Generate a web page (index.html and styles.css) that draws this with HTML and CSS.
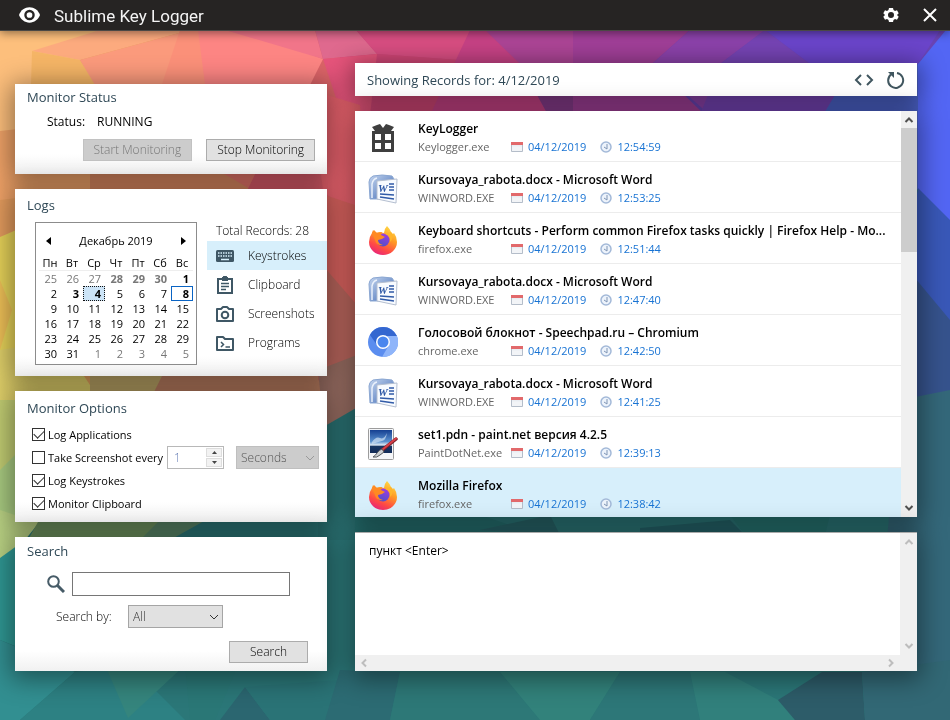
FILE: index.html
```html
<!DOCTYPE html>
<html lang="en">
<head>
<meta charset="utf-8">
<meta name="viewport" content="width=device-width, initial-scale=1">
<title>Sublime Key Logger</title>
<link rel="stylesheet" href="styles.css">
</head>
<body>
<svg class="backdrop" viewBox="0 0 950 720" preserveAspectRatio="none" aria-hidden="true">
  <rect width="950" height="720" fill="#2b7778"/>
  <rect y="30" width="180" height="370" fill="#e2a05c"/>
  <rect x="180" y="30" width="190" height="370" fill="#dc6468"/>
  <rect x="340" y="30" width="250" height="100" fill="#cc4679"/>
  <rect x="590" y="30" width="360" height="100" fill="#6a44b4"/>
  <polygon points="0,30 100,30 80,60 98,120 0,135" fill="#fdbf7c"/>
  <polygon points="32,51 100,30 190,30 80,60" fill="#fcaa7e"/>
  <polygon points="32,51 80,60 98,86 60,130 30,120" fill="#f5b566"/>
  <polygon points="80,60 190,30 165,90 150,190 98,90" fill="#fb9a7c"/>
  <polygon points="180,30 200,30 208,90 205,200 140,200 160,90" fill="#fb9079"/>
  <polygon points="198,30 245,30 323,59 305,95 260,200 207,100" fill="#fd8583"/>
  <polygon points="225,30 315,30 323,59" fill="#f17589"/>
  <polygon points="315,30 356,30 377,54 323,59" fill="#df698e"/>
  <polygon points="323,59 377,54 400,130 355,180 340,110" fill="#e6547b"/>
  <polygon points="356,30 475,30 459,60 377,54" fill="#d94e82"/>
  <polygon points="377,54 459,60 430,115 370,115" fill="#d14676"/>
  <polygon points="470,30 485,30 520,64 560,115 430,115" fill="#c74285"/>
  <polygon points="485,30 573,30 573,64 520,64" fill="#ad4596"/>
  <polygon points="520,64 573,64 573,115 548,115" fill="#883c8c"/>
  <polygon points="573,30 690,30 652,64 705,115 573,115" fill="#a13f98"/>
  <polygon points="690,30 765,30 720,64 710,115 652,64" fill="#8c42ab"/>
  <polygon points="765,30 940,30 918,64 810,64" fill="#6b45cb"/>
  <polygon points="765,30 810,64 840,96 830,115 700,115 720,64" fill="#7644b5"/>
  <polygon points="918,64 946,30 950,30 950,230 918,190" fill="#5366f4"/>
  <polygon points="820,120 838,90 918,64 918,190 880,150" fill="#4b62c9"/>
  <polygon points="918,188 950,220 950,330 900,300" fill="#3958b8"/>
  <polygon points="900,260 950,320 950,410 900,410" fill="#36538d"/>
  <polygon points="900,400 950,390 950,720 870,720" fill="#34687a"/>
  <polygon points="0,131 98,120 90,200 0,205" fill="#efa267"/>
  <polygon points="0,200 160,180 160,400 0,240" fill="#e39b5d"/>
  <polygon points="0,237 35,222 35,340 0,370" fill="#e6d259"/>
  <polygon points="0,280 12,310 0,350" fill="#edbf57"/>
  <polygon points="0,350 60,340 100,400 0,410" fill="#dfcf69"/>
  <polygon points="90,340 200,360 190,400 90,400" fill="#bca566"/>
  <polygon points="170,360 330,350 330,400 150,400" fill="#b97c5f"/>
  <polygon points="90,160 205,160 252,190 90,195" fill="#db8860"/>
  <polygon points="200,160 280,160 252,190" fill="#e57569"/>
  <polygon points="262,160 370,160 370,260 310,200 245,195" fill="#da5b69"/>
  <polygon points="310,90 360,105 370,240 323,190" fill="#e7616c"/>
  <polygon points="310,190 370,210 370,330 320,270" fill="#d9625e"/>
  <polygon points="318,260 370,320 370,410 318,380" fill="#ba665d"/>
  <polygon points="318,370 370,350 370,430 325,440" fill="#986d62"/>
  <polygon points="318,430 370,400 370,540 318,540" fill="#2a7273"/>
  <polygon points="0,400 20,400 30,450 0,480" fill="#c1cc72"/>
  <polygon points="0,470 30,440 45,522 0,540" fill="#a8ca80"/>
  <polygon points="15,515 45,515 25,540 0,560 0,510" fill="#b9d183"/>
  <polygon points="42,515 165,515 150,540 25,545" fill="#6f945f"/>
  <polygon points="165,515 215,515 170,540 140,540" fill="#5a8768"/>
  <polygon points="0,558 25,540 25,650 0,640" fill="#2f9793"/>
  <polygon points="0,640 75,672 20,720 0,720" fill="#328f91"/>
  <polygon points="75,672 130,665 185,720 20,720" fill="#2d8183"/>
  <polygon points="105,665 185,665 128,718" fill="#35857d"/>
  <polygon points="185,665 235,672 215,720 190,720" fill="#2a7776"/>
  <polygon points="245,687 270,720 220,720" fill="#2b6670"/>
  <polygon points="245,687 340,680 325,720 270,720" fill="#2a7376"/>
  <polygon points="340,670 400,672 390,720 325,720" fill="#2c6b73"/>
  <polygon points="400,672 500,672 540,720 390,720" fill="#2d7877"/>
  <polygon points="500,672 620,672 590,720 540,720" fill="#32827b"/>
  <polygon points="620,672 690,672 700,720 590,720" fill="#2d7778"/>
  <polygon points="690,672 725,672 778,700 795,720 700,720" fill="#31807c"/>
  <polygon points="778,700 822,672 862,672 865,720 795,720" fill="#2d5c69"/>
  <polygon points="862,672 950,660 950,720 865,720" fill="#326875"/>
  <polygon points="355,515 480,515 540,535 355,535" fill="#257070"/>
  <polygon points="480,530 550,515 560,535" fill="#28656a"/>
  <polygon points="640,528 730,520 745,535 640,535" fill="#24646a"/>
  <polygon points="730,515 830,515 825,535 745,535" fill="#267471"/>
</svg>

<svg class="defs" aria-hidden="true">
  <defs>
    <linearGradient id="g-word" x1="0" y1="0" x2="1" y2="1"><stop offset="0" stop-color="#c5d6ef"/><stop offset="1" stop-color="#3d68b4"/></linearGradient>
    <linearGradient id="g-fox" x1=".8" y1="0" x2=".3" y2="1"><stop offset="0" stop-color="#ffe14a"/><stop offset=".4" stop-color="#ff9a24"/><stop offset=".75" stop-color="#ff4a45"/><stop offset="1" stop-color="#e8257b"/></linearGradient>
    <linearGradient id="g-globe" x1=".7" y1="0" x2=".3" y2="1"><stop offset="0" stop-color="#a03be0"/><stop offset="1" stop-color="#4c50c8"/></linearGradient>
    <linearGradient id="g-sky" x1="0" y1="0" x2="0" y2="1"><stop offset="0" stop-color="#153f91"/><stop offset=".5" stop-color="#5b92d0"/><stop offset=".66" stop-color="#e5eef6"/><stop offset=".7" stop-color="#183765"/><stop offset="1" stop-color="#122b58"/></linearGradient>
    <symbol id="gift" viewBox="0 0 30 30"><path d="M4 8h22v21H4z" fill="#3f3f3f"/><path d="M7 11h6v6H7zM17 11h6v6h-6zM7 20h6v6H7zM17 20h6v6h-6z" fill="#fff"/><path d="M15 5 12 1 9 2 4 4l3 4h16l3-4-5-2-3-1z" fill="#3f3f3f"/></symbol>
    <symbol id="word" viewBox="0 0 30 30"><path d="M5 2q9-2 19 0l2 3-3 20H2L1 8q0-4 4-6z" fill="url(#g-word)" stroke="#8ba7d2"/><path d="M9 4q-4 1-5 6v14" fill="none" stroke="#eaf1fb" stroke-width="1.500"/><path d="m9 7 20-2-1 24-19-4z" fill="#f8fbff" stroke="#b5bfd0"/><text x="10" y="18" class="w-mark">W</text><path d="M21 10h5M21 13h5M21 16h5M12 20l14 1M12 23l14 2" stroke="#315ba8" stroke-width="1.500"/></symbol>
    <symbol id="fox" viewBox="0 0 30 30"><path d="M19 1q3 3 4 6l2 2 1-1q3 4 3 9a14 13 0 0 1-28 0q0-5 3-9l1-3 2 3 5-1 4 1q0-4 3-7z" fill="url(#g-fox)"/><circle cx="15" cy="15" r="6.500" fill="url(#g-globe)"/><path d="M4 8 6 5l3 3 5-1-1 3 4 2-3 2-4 1q0 4 5 5-7 1-8-5-2-4-3-7z" fill="#ff8a22"/><path d="M17 9q6 1 5 8 5-5 1-10z" fill="#ffb52b"/></symbol>
    <symbol id="chrome" viewBox="0 0 30 30"><circle cx="15" cy="15" r="15" fill="#5b8def"/><path d="M15 0A15 15 0 0 1 29 9H15a7 7 0 0 0-6 9L2 8A15 15 0 0 1 15 0z" fill="#3467d0"/><path d="M29 9a15 15 0 0 1-15 21l7-12q2-5-2-9z" fill="#8fb5fa"/><circle cx="15" cy="15" r="7" fill="#fff"/><circle cx="15" cy="15" r="5.500" fill="#4a86ee"/></symbol>
    <symbol id="paint" viewBox="0 0 30 32"><rect x="0.500" y="0.500" width="25" height="31" rx="1" fill="#f5f6f8" stroke="#9c9c9c"/><rect x="2" y="2" width="22" height="23" fill="url(#g-sky)"/><path d="M4 14q4-6 8-4t7-5q-1 7-5 8t-10 3z" fill="#cfe0f2" opacity=".7"/><path d="M28 11 13 23" stroke="#7d1c26" stroke-width="3.500" stroke-linecap="round"/><path d="M28 10.500 14 22" stroke="#d84049" stroke-width="2" stroke-linecap="round"/><path d="m14 21 2 3-4 3q-3 3-7 2 3-2 4-4 2-3 5-4z" fill="#ccd0d4" stroke="#565b61"/></symbol>
    <symbol id="date" viewBox="0 0 12 12"><path d="M.5 1.500h11v9H.5z" fill="#e9edf2" stroke="#b4bdc9"/><path d="M0 1h12v3H0z" fill="#e2696b"/><path d="M2 5v5M4 5v5M6 5v5M8 5v5M10 5v5M1 7h10M1 9h10" stroke="#fff" stroke-width=".5"/></symbol>
    <symbol id="clock" viewBox="0 0 12 12"><circle cx="6" cy="6" r="5" fill="#edf3fb" stroke="#a3b9d8" stroke-width="1.500"/><path d="M7 3v5L4 6" fill="none" stroke="#7f95b5"/></symbol>
    <symbol id="up" viewBox="0 0 10 10"><path d="M1.500 7 5 3.500 8.500 7" fill="none" stroke="currentColor" stroke-width="2"/></symbol>
    <symbol id="down" viewBox="0 0 10 10"><path d="M1.500 3 5 6.500 8.500 3" fill="none" stroke="currentColor" stroke-width="2"/></symbol>
    <symbol id="left" viewBox="0 0 10 10"><path d="M7 1.500 3.500 5 7 8.500" fill="none" stroke="currentColor" stroke-width="2"/></symbol>
    <symbol id="right" viewBox="0 0 10 10"><path d="M3 1.500 6.500 5 3 8.500" fill="none" stroke="currentColor" stroke-width="2"/></symbol>
  </defs>
</svg>

<header class="titlebar">
  <svg class="eye" viewBox="0 0 22 16" aria-hidden="true"><path d="M11 0C6 0 2 3 0 8c2 5 6 8 11 8s9-3 11-8c-2-5-6-8-11-8z" fill="#fff"/><circle cx="11" cy="8" r="5.500" fill="#262423"/><circle cx="11" cy="8" r="3" fill="#fff"/></svg>
  <h1>Sublime Key Logger</h1>
  <button class="icon-btn" aria-label="Settings"><svg width="16" height="16" viewBox="0 0 16 16"><path fill="#fff" fill-rule="evenodd" d="M6 1h4l.5 2 1.500 1 2-.7 1.700 3L14 8l1.700 1.700-1.700 3-2-.7-1.500 1-.5 2H6l-.5-2L4 12l-2 .7-1.700-3L2 8 .3 6.300l1.700-3L4 4l1.500-1zM8 5a3 3 0 1 0 0 6 3 3 0 0 0 0-6z"/></svg></button>
  <button class="icon-btn" aria-label="Close"><svg width="14" height="14" viewBox="0 0 14 14"><path d="m1 1 12 12M13 1 1 13" stroke="#fff" stroke-width="2"/></svg></button>
</header>

<main class="layout">
  <div class="side">
    <section class="panel status">
      <h2>Monitor Status</h2>
      <p class="state"><span>Status:</span><span>RUNNING</span></p>
      <div class="actions"><button class="btn" disabled>Start Monitoring</button><button class="btn">Stop Monitoring</button></div>
    </section>

    <section class="panel logs">
      <h2>Logs</h2>
      <div class="logs-body">
        <div class="calendar">
          <div class="month"><button aria-label="Previous month"><svg width="5" height="8" viewBox="0 0 5 8"><path d="M5 0v8L0 4z"/></svg></button><span>Декабрь 2019</span><button aria-label="Next month"><svg width="5" height="8" viewBox="0 0 5 8"><path d="M0 0v8l5-4z"/></svg></button></div>
          <table>
            <thead><tr><th>Пн</th><th>Вт</th><th>Ср</th><th>Чт</th><th>Пт</th><th>Сб</th><th>Вс</th></tr></thead>
            <tbody>
              <tr><td class="out">25</td><td class="out">26</td><td class="out">27</td><td class="out has">28</td><td class="out has">29</td><td class="out has">30</td><td class="has">1</td></tr>
              <tr><td>2</td><td class="has">3</td><td class="has picked">4</td><td>5</td><td>6</td><td>7</td><td class="has today">8</td></tr>
              <tr><td>9</td><td>10</td><td>11</td><td>12</td><td>13</td><td>14</td><td>15</td></tr>
              <tr><td>16</td><td>17</td><td>18</td><td>19</td><td>20</td><td>21</td><td>22</td></tr>
              <tr><td>23</td><td>24</td><td>25</td><td>26</td><td>27</td><td>28</td><td>29</td></tr>
              <tr><td>30</td><td>31</td><td class="out">1</td><td class="out">2</td><td class="out">3</td><td class="out">4</td><td class="out">5</td></tr>
            </tbody>
          </table>
        </div>
        <nav class="kinds">
          <p>Total Records: 28</p>
          <a href="#keystrokes" class="on"><svg viewBox="0 0 18 18"><rect y="3" width="18" height="12" rx="1.500" fill="#3f5765"/><path d="M2 6h14M2 9h14" stroke="#d7effb" stroke-width="1.500" stroke-dasharray="1.500 1"/><path d="M5 12.500h8" stroke="#d7effb" stroke-width="1.500"/></svg>Keystrokes</a>
          <a href="#clipboard"><svg viewBox="0 0 18 18"><g fill="none" stroke="#3f5765" stroke-width="2"><path d="M2 3h14v14H2z"/><path d="M5 7.500h8M5 10.500h8M5 13.500h5" stroke-width="1.500"/></g><path d="M6 1h1a2 2 0 0 1 4 0h1v4H6z" fill="#3f5765"/></svg>Clipboard</a>
          <a href="#screenshots"><svg viewBox="0 0 18 18"><g fill="none" stroke="#3f5765" stroke-width="2"><path d="M1 4h4l2-2h4l2 2h4v12H1z" stroke-linejoin="round"/><circle cx="9" cy="10" r="3.300"/></g></svg>Screenshots</a>
          <a href="#programs"><svg viewBox="0 0 18 18"><g fill="none" stroke="#3f5765" stroke-width="2"><path d="M1 3h6l2 2h8v11H1z" stroke-linejoin="round"/><path d="m5 8 2.500 2.500L5 13M9.500 13H14" stroke-width="1.500"/></g></svg>Programs</a>
        </nav>
      </div>
    </section>

    <section class="panel options">
      <h2>Monitor Options</h2>
      <div class="opt"><label><input type="checkbox" checked>Log Applications</label></div>
      <div class="opt timed">
        <label><input type="checkbox">Take Screenshot every</label>
        <span class="spinner"><input type="text" value="1" aria-label="Interval" disabled><span class="steps"><button aria-label="Increase" disabled><svg width="5" height="3" viewBox="0 0 5 3"><path d="M0 3h5L2.500 0z" fill="#444"/></svg></button><button aria-label="Decrease" disabled><svg width="5" height="3" viewBox="0 0 5 3"><path d="M0 0h5L2.500 3z" fill="#444"/></svg></button></span></span>
        <span class="select"><select aria-label="Unit" disabled><option>Seconds</option></select><svg width="10" height="6" viewBox="0 0 10 6"><path d="m1 1 4 4 4-4" fill="none" stroke="currentColor"/></svg></span>
      </div>
      <div class="opt"><label><input type="checkbox" checked>Log Keystrokes</label></div>
      <div class="opt"><label><input type="checkbox" checked>Monitor Clipboard</label></div>
    </section>

    <section class="panel search">
      <h2>Search</h2>
      <div class="query"><svg width="18" height="18" viewBox="0 0 18 18" aria-hidden="true"><circle cx="6.500" cy="6.500" r="5.300" fill="none" stroke="#465b67" stroke-width="2"/><path d="m10 10 7 7" stroke="#465b67" stroke-width="3"/></svg><input type="text" aria-label="Search text"></div>
      <div class="by"><label for="by">Search by:</label><span class="select"><select id="by"><option>All</option></select><svg width="10" height="6" viewBox="0 0 10 6"><path d="m1 1 4 4 4-4" fill="none" stroke="currentColor"/></svg></span></div>
      <div class="go"><button class="btn">Search</button></div>
    </section>
  </div>

  <div class="content">
    <section class="panel heading">
      <h2>Showing Records for: 4/12/2019</h2>
      <button class="icon-btn" aria-label="View source"><svg width="20" height="14" viewBox="0 0 20 14"><path d="M7 2 2 7l5 5M13 2l5 5-5 5" fill="none" stroke="#40565f" stroke-width="2"/></svg></button>
      <button class="icon-btn" aria-label="Refresh"><svg width="18" height="18" viewBox="0 0 18 18"><path d="M10 2a7.500 7.500 0 1 1-6 1.500" fill="none" stroke="#40565f" stroke-width="2"/><path d="M1 1h6v6z" fill="#40565f"/></svg></button>
    </section>

    <section class="panel records">
      <ul>
        <li><svg class="app"><use href="#gift"/></svg><div class="rec"><h3>KeyLogger</h3><p><span class="exe">Keylogger.exe</span><svg><use href="#date"/></svg><time>04/12/2019</time><svg><use href="#clock"/></svg><time>12:54:59</time></p></div></li>
        <li><svg class="app"><use href="#word"/></svg><div class="rec"><h3>Kursovaya_rabota.docx - Microsoft Word</h3><p><span class="exe">WINWORD.EXE</span><svg><use href="#date"/></svg><time>04/12/2019</time><svg><use href="#clock"/></svg><time>12:53:25</time></p></div></li>
        <li><svg class="app"><use href="#fox"/></svg><div class="rec"><h3>Keyboard shortcuts - Perform common Firefox tasks quickly | Firefox Help - Mo...</h3><p><span class="exe">firefox.exe</span><svg><use href="#date"/></svg><time>04/12/2019</time><svg><use href="#clock"/></svg><time>12:51:44</time></p></div></li>
        <li><svg class="app"><use href="#word"/></svg><div class="rec"><h3>Kursovaya_rabota.docx - Microsoft Word</h3><p><span class="exe">WINWORD.EXE</span><svg><use href="#date"/></svg><time>04/12/2019</time><svg><use href="#clock"/></svg><time>12:47:40</time></p></div></li>
        <li><svg class="app"><use href="#chrome"/></svg><div class="rec"><h3>Голосовой блокнот - Speechpad.ru – Chromium</h3><p><span class="exe">chrome.exe</span><svg><use href="#date"/></svg><time>04/12/2019</time><svg><use href="#clock"/></svg><time>12:42:50</time></p></div></li>
        <li><svg class="app"><use href="#word"/></svg><div class="rec"><h3>Kursovaya_rabota.docx - Microsoft Word</h3><p><span class="exe">WINWORD.EXE</span><svg><use href="#date"/></svg><time>04/12/2019</time><svg><use href="#clock"/></svg><time>12:41:25</time></p></div></li>
        <li><svg class="app"><use href="#paint"/></svg><div class="rec"><h3>set1.pdn - paint.net версия 4.2.5</h3><p><span class="exe">PaintDotNet.exe</span><svg><use href="#date"/></svg><time>04/12/2019</time><svg><use href="#clock"/></svg><time>12:39:13</time></p></div></li>
        <li class="on"><svg class="app"><use href="#fox"/></svg><div class="rec"><h3>Mozilla Firefox</h3><p><span class="exe">firefox.exe</span><svg><use href="#date"/></svg><time>04/12/2019</time><svg><use href="#clock"/></svg><time>12:38:42</time></p></div></li>
      </ul>
      <div class="vbar"><svg><use href="#up"/></svg><i class="thumb"></i><svg><use href="#down"/></svg></div>
    </section>

    <section class="panel detail">
      <textarea aria-label="Recorded text" readonly>пункт &lt;Enter&gt;</textarea>
      <div class="vbar idle"><svg><use href="#up"/></svg><svg><use href="#down"/></svg></div>
      <div class="hbar idle"><svg><use href="#left"/></svg><svg><use href="#right"/></svg></div>
    </section>
  </div>
</main>
</body>
</html>
```
FILE: styles.css
```css
* { box-sizing: border-box; }
body {
  margin: 0;
  min-height: 100vh;
  font: 300 12px/16px "Open Sans", "Noto Sans", sans-serif;
  color: #000;
}
h1, h2, h3, p, ul { margin: 0; padding: 0; font-weight: inherit; }
ul { list-style: none; }
button, input, select, textarea { font: inherit; color: inherit; margin: 0; border-radius: 0; }
svg { flex: none; display: block; }

.backdrop { position: fixed; inset: 0; width: 100%; height: 100%; z-index: -1; }
.defs { position: absolute; width: 0; height: 0; }

.titlebar {
  display: flex;
  align-items: center;
  height: 31px;
  padding: 0 13px 0 19px;
  background: #262423;
  border-bottom: 1px solid #4a4845;
  box-shadow: 0 2px 10px rgba(0, 0, 0, .45);
}
.eye { width: 21px; height: 16px; }
.titlebar h1 { flex: 1; margin-left: 14px; padding-top: 2px; font: 17px/28px Roboto, sans-serif; color: #f4f4f4; }
.icon-btn { display: grid; place-items: center; padding: 0; border: 0; background: none; }
.titlebar .icon-btn + .icon-btn { margin-left: 24px; }

.layout {
  display: grid;
  grid-template-columns: 312fr 562fr;
  gap: 28px;
  padding: 32px 33px 48px 15px;
}
.side, .content { display: flex; flex-direction: column; gap: 15px; min-width: 0; }
.side { padding-top: 21px; }

.panel {
  background: linear-gradient(#fff calc(100% - 20px), #f1f1f1);
  box-shadow: 0 4px 24px 4px rgba(0, 0, 0, .42);
}
.panel h2 { font-size: 13px; line-height: 18px; font-weight: 500; color: #2f4856; }
.side .panel { padding: 4px 8px 8px 12px; }

.status { height: 90px; }
.state { display: flex; gap: 12px; margin: 8px 0 9px 20px; font-weight: 400; }
.actions { display: flex; justify-content: flex-end; gap: 14px; padding-right: 4px; }
.btn { height: 22px; padding: 0 10px; border: 1px solid #acacac; background: #e1e1e1; line-height: 18px; }
.btn:disabled { background: #ccc; border-color: #c2c2c2; color: #777; }

.side .logs { height: 187px; padding: 7px 0 0 12px; }
.logs-body { display: flex; justify-content: space-between; padding: 8px 0 0 8px; }
.calendar { width: 162px; height: 143px; padding: 10px 3px 0; border: 1px solid #8c8c8c; background: #fff; font-size: 11px; font-weight: 400; }
.month { display: flex; justify-content: space-between; align-items: center; padding: 0 7px; }
.month button { padding: 0; border: 0; background: none; }
.calendar table { width: 100%; margin-top: 6px; border-collapse: collapse; table-layout: fixed; line-height: 15px; }
.calendar th { padding: 0; font-weight: 400; border-bottom: 1px solid #eee; }
.calendar td { height: 15px; padding: 0 4px 0 0; text-align: right; line-height: 15px; }
.calendar .out { color: #777; }
.calendar .has { font-weight: 700; }
.calendar .picked { background: #cce4f7; outline: 1px dotted #111; outline-offset: -1px; }
.calendar .today { outline: 1px solid #0a64c4; outline-offset: -1px; }
.kinds { width: 120px; padding-top: 1px; }
.kinds p { padding: 0 0 2px 9px; }
.kinds a { display: flex; align-items: center; gap: 14px; height: 29px; padding-left: 9px; color: inherit; text-decoration: none; }
.kinds a svg { width: 18px; height: 18px; }
.kinds .on { background: #d7effb; }

.side .options { height: 131px; padding-top: 8px; }
.opt { display: flex; align-items: center; height: 23px; padding-left: 5px; }
.options h2 + .opt { margin-top: 6px; }
.opt label { display: flex; align-items: center; gap: 3px; font-size: 11px; font-weight: 400; white-space: nowrap; }
.opt input[type=checkbox] {
  appearance: none;
  display: grid;
  place-items: center;
  width: 13px;
  height: 13px;
  border: 1px solid #333;
  background: #fff;
}
.opt input[type=checkbox]:checked::before {
  content: "";
  width: 9px;
  height: 5px;
  margin-bottom: 3px;
  border: solid #333;
  border-width: 0 0 1px 1px;
  transform: rotate(-45deg);
}
.spinner { display: flex; width: 57px; height: 23px; margin-left: auto; padding: 1px; border: 1px solid #b8b8b8; background: #fff; }
.spinner input { flex: 1; min-width: 0; padding: 0 5px; border: 0; background: none; color: #6a82b8; }
.steps { display: grid; width: 16px; gap: 1px; }
.steps button { display: grid; place-items: center; min-height: 0; padding: 0; border: 1px solid #ddd; background: #f2f2f2; }
.select { display: grid; align-items: center; width: 95px; height: 23px; color: #333; }
.select select { grid-area: 1 / 1; width: 100%; height: 100%; padding: 0 4px; border: 1px solid #a5a5a5; background: #e1e1e1; appearance: none; }
.select svg { grid-area: 1 / 1; justify-self: end; margin-right: 4px; pointer-events: none; }
.timed .select { width: 83px; margin-left: 12px; color: #999; }
.timed select { background: #ccc; border-color: #bfbfbf; color: #555; opacity: 1; }

.side .search { height: 134px; padding-top: 5px; }
.query { display: flex; align-items: center; gap: 7px; padding: 12px 29px 9px 20px; }
.query input { flex: 1; min-width: 0; height: 24px; padding: 0 4px; border: 1px solid #767676; background: #fff; }
.by { display: flex; align-items: center; justify-content: space-between; padding: 0 96px 0 29px; }
.go { display: flex; justify-content: flex-end; padding: 13px 11px 0 0; }
.go .btn { width: 79px; }

.heading { display: flex; align-items: center; height: 33px; padding: 0 12px; background: #fff; }
.heading h2 { flex: 1; }
.heading .icon-btn + .icon-btn { margin-left: 13px; }

.records { display: flex; height: 406px; overflow: hidden; background: #fff; }
.records ul { flex: 1; min-width: 0; }
.records li { display: flex; align-items: center; gap: 20px; height: 51px; padding: 3px 8px 0 13px; border-bottom: 1px solid #ececec; }
.records .on { background: #d7effb; }
.app { width: 30px; height: 32px; }
.w-mark { font: italic bold 11px "Liberation Serif", serif; fill: #2c57a5; }
.rec { min-width: 0; }
.rec h3 { font-size: 12px; line-height: 18px; font-weight: 600; white-space: nowrap; }
.rec p { display: flex; align-items: center; font-size: 11px; font-weight: 400; line-height: 18px; color: #666; }
.exe { width: 93px; }
.rec p svg { width: 12px; height: 12px; margin-right: 5px; }
.rec time { color: #1873d3; }
.rec time + svg { margin-left: 14px; }

.vbar { display: flex; flex-direction: column; align-items: center; width: 16px; padding: 4px 0; background: #f0f0f0; color: #505050; }
.vbar svg, .hbar svg { width: 10px; height: 10px; }
.vbar svg:last-child { margin-top: auto; }
.thumb { width: 100%; height: 124px; margin-top: 3px; background: #cdcdcd; }
.idle { color: #bdbdbd; }

.detail { display: grid; grid-template: 1fr 16px / 1fr 17px; height: 139px; background: #f0f0f0; border-top: 1px solid #aaa; }
.detail textarea { width: 100%; padding: 10px 14px; border: 0; resize: none; background: #fff; font-weight: 400; overflow: hidden; outline: 0; }
.detail .vbar { width: 17px; }
.hbar { display: flex; align-items: center; justify-content: space-between; padding: 0 4px; }
```
